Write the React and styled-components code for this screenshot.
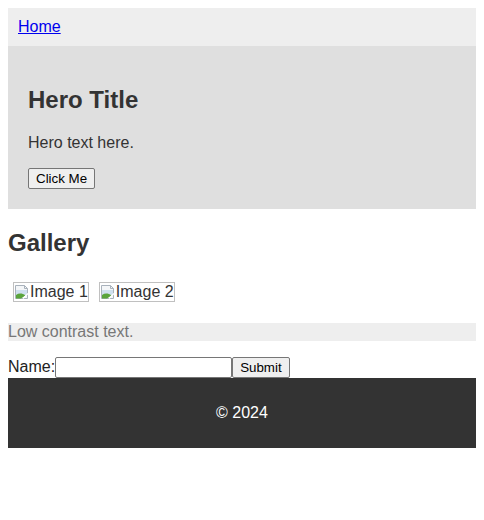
import React from "react";
import styled, { createGlobalStyle } from "styled-components";

const Global = createGlobalStyle`
  html, body { background: #fff; }
  body {
    margin: 8px;
    font-family: "Liberation Sans", Arial, sans-serif;
    font-size: 16px;
    color: #333;
  }
`;

const Nav = styled.nav`
  background: #eee;
  padding: 10px;
  line-height: 18px;
`;

const NavLink = styled.a`
  color: #0000ee;
  text-decoration: underline;
`;

const Hero = styled.section`
  background: #dfdfdf;
  padding: 20px;
`;

const Heading = styled.h2`
  font-size: 24px;
  font-weight: bold;
  margin: 19.92px 0;
  color: #333;
  line-height: normal;
`;

const Para = styled.p`
  margin: 16px 0;
  line-height: normal;
`;

const Button = styled.button`
  font-family: "Liberation Sans", Arial, sans-serif;
  font-size: 13.33px;
  color: #000;
  background: #efefef;
  border: 1px solid #767676;
  border-radius: 2px;
  padding: 1px 7px;
  height: 21px;
  line-height: normal;
`;

const Gallery = styled.div`
  display: flex;
  align-items: center;
`;

const BrokenImage = styled.span`
  display: inline-flex;
  align-items: center;
  margin: 5px;
  height: 18px;
  border: 1px solid #c0c0c0;
  font-size: 16px;
  color: #333;
  line-height: 18px;
`;

const IconBox = styled.svg`
  width: 16px;
  height: 16px;
  flex: none;
`;

const LowContrast = styled.p`
  margin: 16px 0;
  background: #eee;
  color: #777;
  line-height: normal;
`;

const Form = styled.form`
  display: flex;
  align-items: center;
  height: 21px;
  color: #222;
`;

const Input = styled.input`
  width: 177px;
  height: 21px;
  box-sizing: border-box;
  border: 1px solid #767676;
  border-radius: 2px;
  padding: 1px 2px;
  font-size: 13.33px;
  font-family: "Liberation Sans", Arial, sans-serif;
  margin: 0;
`;

const Footer = styled.footer`
  background: #333;
  color: #fff;
  text-align: center;
  padding: 10px;
`;

function BrokenIcon() {
  return (
    <IconBox viewBox="0 0 16 16">
      <path d="M1.5 1.5h9l3 3v10h-12z" fill="#f4f6f8" stroke="#a9b2bc" />
      <path d="M10.5 1.5v3h3" fill="none" stroke="#a9b2bc" />
      <path d="M2 6h11v6H2z" fill="#cfe0ef" />
      <path d="M2 14.5V11c3-2 6-2 9.5 0.5L7 14.5z" fill="#5aa43c" />
      <path d="M9 14.5l5-5" stroke="#fff" strokeWidth="1.3" />
    </IconBox>
  );
}

function Img({ alt }) {
  return (
    <BrokenImage>
      <BrokenIcon />
      {alt}
    </BrokenImage>
  );
}

export default function App() {
  return (
    <>
      <Global />
      <Nav>
        <NavLink href="#">Home</NavLink>
      </Nav>
      <Hero>
        <Heading>Hero Title</Heading>
        <Para>Hero text here.</Para>
        <Button type="button">Click Me</Button>
      </Hero>
      <Heading as="h2">Gallery</Heading>
      <Gallery>
        <Img alt="Image 1" />
        <Img alt="Image 2" />
      </Gallery>
      <LowContrast>Low contrast text.</LowContrast>
      <Form onSubmit={(e) => e.preventDefault()}>
        <label htmlFor="name">Name:</label>
        <Input id="name" type="text" />
        <Button type="submit">Submit</Button>
      </Form>
      <Footer>
        <Para>© 2024</Para>
      </Footer>
    </>
  );
}
